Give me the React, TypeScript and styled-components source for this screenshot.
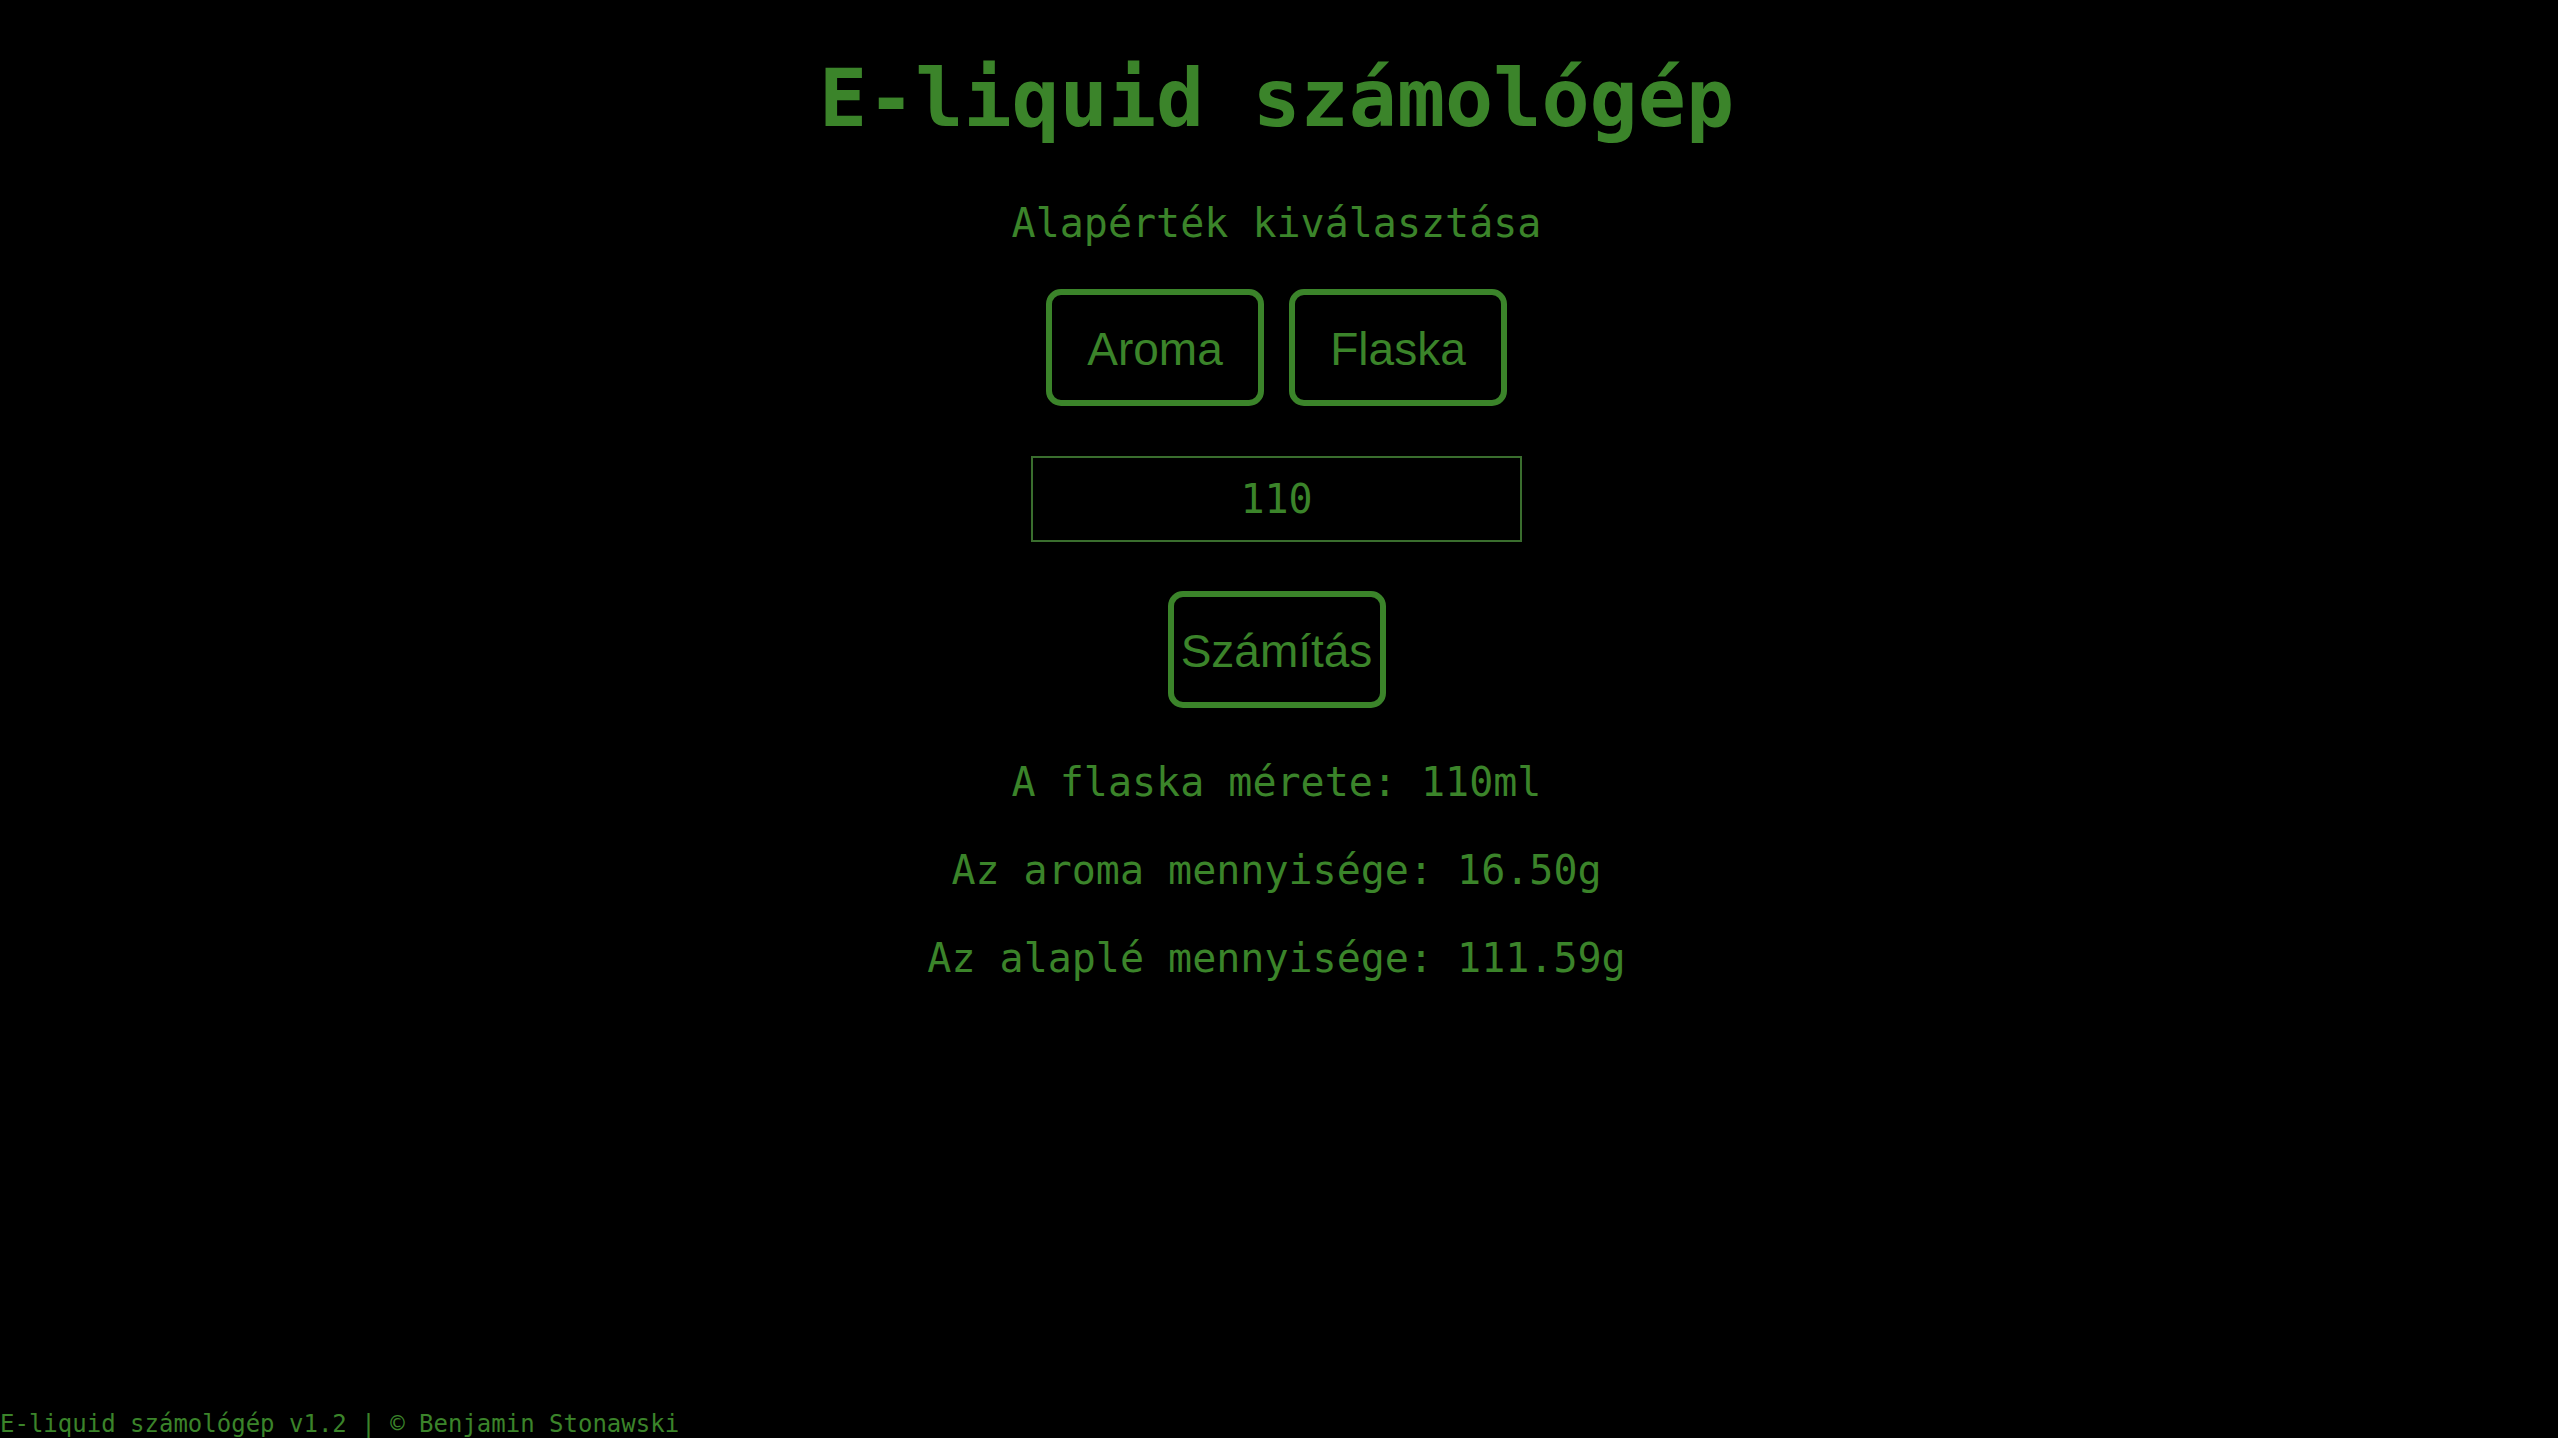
import React, { useState } from "react";
import styled, { createGlobalStyle } from "styled-components";

const GREEN = "#3b842a";
const MONO = `"DejaVu Sans Mono", "Liberation Mono", monospace`;
const SANS = `"Liberation Sans", Arial, sans-serif`;

const Global = createGlobalStyle`
  html, body {
    margin: 0;
    padding: 0;
    background: #000;
  }
  body {
    font-family: ${MONO};
    color: ${GREEN};
  }
`;

const Page = styled.div`
  box-sizing: border-box;
  min-height: 100vh;
  padding-right: 5px;
  display: flex;
  flex-direction: column;
  align-items: center;
  background: #000;
`;

const Title = styled.h1`
  margin: 51px 0 0;
  font-family: ${MONO};
  font-size: 80px;
  line-height: 96px;
  font-weight: bold;
  color: ${GREEN};
`;

const Subtitle = styled.div`
  margin-top: 52px;
  font-family: ${MONO};
  font-size: 40px;
  line-height: 48px;
  color: ${GREEN};
`;

const ButtonRow = styled.div`
  margin-top: 42px;
  display: flex;
  gap: 25px;
`;

const Button = styled.button<{ $active?: boolean }>`
  box-sizing: border-box;
  width: 218px;
  height: 117px;
  border: 6px solid ${GREEN};
  border-radius: 15px;
  background: #000;
  color: ${GREEN};
  font-family: ${SANS};
  font-size: 46px;
  padding: 2px 0 0;
  cursor: pointer;
`;

const Input = styled.input`
  box-sizing: border-box;
  margin-top: 50px;
  width: 491px;
  height: 86px;
  border: 2px solid #3a6e2e;
  background: #000;
  color: ${GREEN};
  font-family: ${MONO};
  font-size: 40px;
  text-align: center;
  outline: none;
`;

const CalcButton = styled(Button)`
  margin-top: 49px;
`;

const Results = styled.div`
  margin-top: 50px;
  display: flex;
  flex-direction: column;
  align-items: center;
  gap: 40px;
`;

const ResultLine = styled.div`
  font-family: ${MONO};
  font-size: 40px;
  line-height: 48px;
  color: ${GREEN};
  white-space: pre;
`;

const Footer = styled.footer`
  margin-top: auto;
  align-self: stretch;
  font-family: ${MONO};
  font-size: 24px;
  line-height: 28px;
  color: ${GREEN};
  white-space: pre;
`;

export default function App() {
  const [mode, setMode] = useState<"aroma" | "flaska">("flaska");
  const [value, setValue] = useState("110");
  const [result, setResult] = useState({ size: 110, aroma: 16.5, base: 111.59 });

  const calc = () => {
    const v = parseFloat(value) || 0;
    if (mode === "flaska") {
      setResult({ size: v, aroma: v * 0.15, base: v * 0.85 * 1.1934 });
    } else {
      const size = v / 0.15;
      setResult({ size, aroma: v, base: size * 0.85 * 1.1934 });
    }
  };

  return (
    <Page>
      <Global />
      <Title>E-liquid számológép</Title>
      <Subtitle>Alapérték kiválasztása</Subtitle>
      <ButtonRow>
        <Button $active={mode === "aroma"} onClick={() => setMode("aroma")}>
          Aroma
        </Button>
        <Button $active={mode === "flaska"} onClick={() => setMode("flaska")}>
          Flaska
        </Button>
      </ButtonRow>
      <Input value={value} onChange={(e) => setValue(e.target.value)} />
      <CalcButton onClick={calc}>Számítás</CalcButton>
      <Results>
        <ResultLine>A flaska mérete: {Math.round(result.size)}ml</ResultLine>
        <ResultLine>Az aroma mennyisége: {result.aroma.toFixed(2)}g</ResultLine>
        <ResultLine>Az alaplé mennyisége: {result.base.toFixed(2)}g</ResultLine>
      </Results>
      <Footer>E-liquid számológép v1.2 | © Benjamin Stonawski</Footer>
    </Page>
  );
}
